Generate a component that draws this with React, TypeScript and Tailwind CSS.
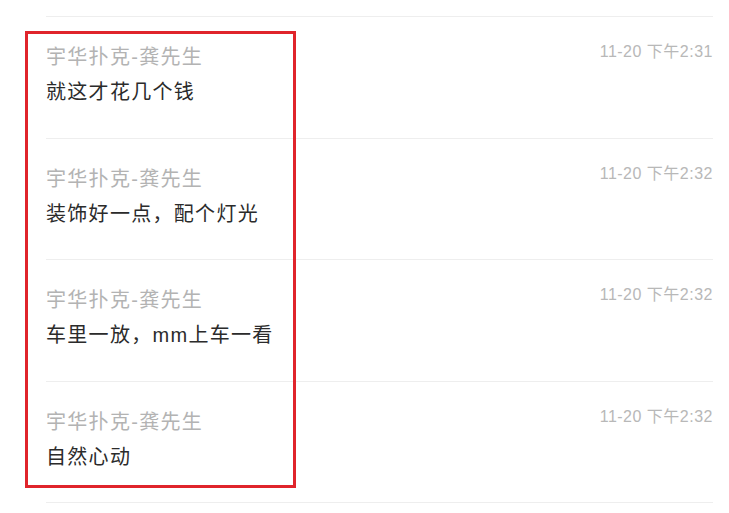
import React from 'react';

export default function App() {
  const messages = [
    { id: 1, name: "宇华扑克-龚先生", text: "就这才花几个钱", time: "11-20 下午2:31" },
    { id: 2, name: "宇华扑克-龚先生", text: "装饰好一点，配个灯光", time: "11-20 下午2:32" },
    { id: 3, name: "宇华扑克-龚先生", text: "车里一放，mm上车一看", time: "11-20 下午2:32" },
    { id: 4, name: "宇华扑克-龚先生", text: "自然心动", time: "11-20 下午2:32" },
  ];

  return (
    <div className="relative w-[729px] h-[513px] bg-white overflow-hidden font-['Liberation_Sans','Noto_Sans_CJK_SC',sans-serif]">
      <div className="pt-[16px] pl-[46px] pr-[16px]">
        {messages.map((m, i) => (
          <div
            key={m.id}
            className={`flex justify-between border-t border-[#eeeeee] ${i % 2 === 0 ? 'h-[122px]' : 'h-[121px]'}`}
          >
            <div className="pt-[28px]">
              <div className="text-[20px] leading-[24px] tracking-[1.3px] text-[#b3b3b3]">{m.name}</div>
              <div className="mt-[11px] text-[20px] leading-[24px] tracking-[1.3px] text-[#2b2b2b]">{m.text}</div>
            </div>
            <div className="pt-[25px] text-[16px] leading-[20px] tracking-[0.5px] text-[#b8b8b8]">{m.time}</div>
          </div>
        ))}
        <div className="border-t border-[#eeeeee]" />
      </div>

      {/* annotation box */}
      <div className="absolute left-[25px] top-[31px] w-[271px] h-[457px] border-[3px] border-[#e0242b] pointer-events-none" />
    </div>
  );
}
